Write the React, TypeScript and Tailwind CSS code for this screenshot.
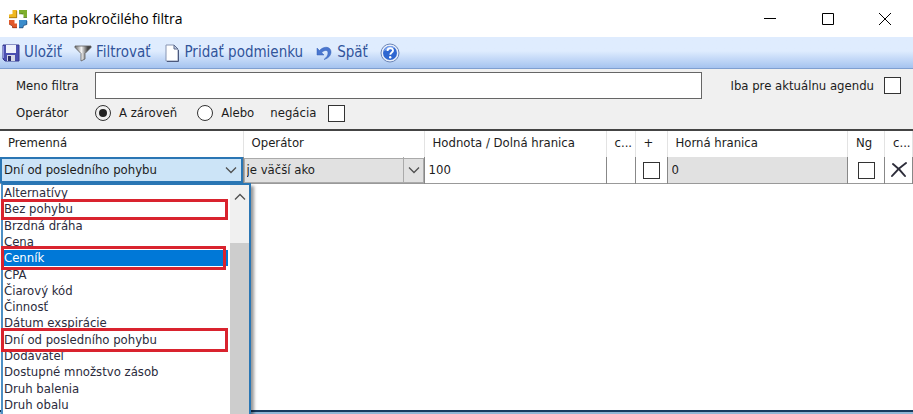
import { ReactNode } from "react";
import clsx from "clsx";

const variables = [
  "Alternatívy",
  "Bez pohybu",
  "Brzdná dráha",
  "Cena",
  "Cenník",
  "CPA",
  "Čiarový kód",
  "Činnosť",
  "Dátum exspirácie",
  "Dní od posledního pohybu",
  "Dodávateľ",
  "Dostupné množstvo zásob",
  "Druh balenia",
  "Druh obalu",
];

// rows framed in red in the list
const frames: Record<string, string> = {
  "Bez pohybu": "-top-0.5 -bottom-0.5 -left-0.5 right-0",
  Cenník: "-top-1 -bottom-1 -left-0.5 right-0.5",
  "Dní od posledního pohybu": "-top-1 -bottom-1 -left-0.5 right-0",
};

function LogoIcon() {
  return (
    <svg viewBox="0 0 20 20" className="size-5" aria-hidden="true">
      <path d="M4.500 1H9v8H1V5.500l3.500-.5z" fill="#f0b820" />
      <path d="M1 8.700h7.700V2" fill="none" stroke="#8a6510" strokeWidth="0.700" />
      <path d="M11 1h8v7.500h-3.500V5.500L11 4.500z" fill="#7fae2c" />
      <path d="M15.500 8.500H19M11 4.800h4" fill="none" stroke="#4c6a18" strokeWidth="0.700" />
      <path d="M1 11h5.500v3.500H9V19H4.500v-2L1 15z" fill="#e2592a" />
      <path d="M1 15l3.500 2v1.700H9" fill="none" stroke="#8c2c10" strokeWidth="0.700" />
      <path d="M11 11h8v4.500l-3.500 1-.5 2.500h-4z" fill="#3b8ccb" />
      <path d="M18.800 12v3.500l-3.300 1-.5 2.300h-4" fill="none" stroke="#17406f" strokeWidth="0.700" />
    </svg>
  );
}

function SaveIcon() {
  return (
    <svg viewBox="0 0 18 18" className="size-[18px]" aria-hidden="true">
      <path d="M1 1h16v16H3l-2-2z" fill="#4a4fb0" stroke="#34388c" />
      <path d="M4 1h10v8H4z" fill="#eef1fb" />
      <path d="M1.500 2v12" stroke="#8b90de" />
      <path d="M5 11h8v6H5z" fill="#d5d8e6" />
      <path d="M6 12h3v5H6z" fill="#2b2e6c" />
    </svg>
  );
}

function FunnelIcon() {
  return (
    <svg viewBox="0 0 18 18" className="size-[18px]" aria-hidden="true">
      <defs>
        <linearGradient id="funnel" x1="0" x2="1">
          <stop offset="0" stopColor="#6c6c6c" />
          <stop offset="0.4" stopColor="#f4f4f4" />
          <stop offset="0.8" stopColor="#444" />
        </linearGradient>
      </defs>
      <path d="M1 2h16v1.500l-6 6V15l-4 2V9.500l-6-6z" fill="url(#funnel)" stroke="#5a5a5a" strokeWidth="0.8" />
    </svg>
  );
}

function PageIcon() {
  return (
    <svg viewBox="0 0 18 18" className="size-[18px]" aria-hidden="true">
      <path d="M3 1h8l4 4v12H3z" fill="#fff" stroke="#8795b3" />
      <path d="M15.500 6v11.500H4" fill="none" stroke="#4b587c" />
      <path d="M11 1v4h4z" fill="#c4d0e6" stroke="#5d6b8d" />
    </svg>
  );
}

function UndoIcon() {
  return (
    <svg viewBox="0 0 18 18" className="size-[18px]" aria-hidden="true">
      <path d="M2 4v7h7L6.700 8.700C9 6 13 5.500 13 9c0 2.500-1.500 4.500-4 6.500 4-1 7-4 7-7.500 0-5.500-7-6.500-11.500-1.500z" fill="#4a76cf" stroke="#3560b6" strokeWidth="0.5" />
    </svg>
  );
}

function HelpIcon() {
  return (
    <svg viewBox="0 0 20 20" className="size-5" aria-hidden="true">
      <circle cx="10" cy="10" r="9" fill="#e9effa" stroke="#6d86b8" />
      <circle cx="10" cy="10" r="7" fill="#2f66d0" />
      <path d="M4 8a6.500 6.500 0 0 1 11-3c-3 0-7 1-11 3z" fill="#7da4ee" />
      <path d="M7.500 8c0-3.500 5.500-3.500 5.500-.5 0 2-2.700 2-2.700 4.200" fill="none" stroke="#fff" strokeWidth="1.900" />
      <circle cx="10.200" cy="14.200" r="1.200" fill="#fff" />
    </svg>
  );
}

function Chevron({ className }: { className?: string }) {
  return (
    <svg viewBox="0 0 12 8" className={clsx("h-2 w-3", className)} fill="none" stroke="#505050" strokeWidth="1.300" aria-hidden="true">
      <path d="M1 1.500l5 5 5-5" />
    </svg>
  );
}

function ToolButton({ icon, children }: { icon: ReactNode; children: ReactNode }) {
  return (
    <button type="button" className="flex items-center gap-1 whitespace-nowrap">
      {icon}
      {children}
    </button>
  );
}

function CheckBox({ id, label }: { id?: string; label?: string }) {
  return (
    <input
      id={id}
      type="checkbox"
      aria-label={label}
      className="block size-[17px] shrink-0 appearance-none border border-[#333] bg-white checked:bg-[#333]"
    />
  );
}

function Radio({ id, checked }: { id: string; checked?: boolean }) {
  return (
    <input
      id={id}
      type="radio"
      name="operator"
      defaultChecked={checked}
      className="size-4 shrink-0 appearance-none rounded-full border border-[#333] bg-white p-[3px] checked:bg-[#222] checked:bg-clip-content"
    />
  );
}

function VariableList() {
  return (
    <div className="absolute top-full left-px z-10 flex h-60 w-[250px] border-2 border-[#2a76b4] border-l-[#4d8fc4] bg-white shadow-[3px_3px_3px_rgba(0,0,0,0.4)]">
      <ul role="listbox" aria-label="Premenná" className="flex h-[228px] flex-1 flex-col">
        {variables.map((name) => (
          <li
            key={name}
            role="option"
            aria-selected={name === "Cenník"}
            className={clsx(
              "relative flex flex-1 items-center pl-px leading-4 whitespace-nowrap",
              name === "Cenník" ? "bg-[#0078d7] text-white" : "text-[#2b2b3c]"
            )}
          >
            {name}
            {frames[name] && (
              <span className={clsx("absolute z-10 border-3 border-[#d9232e]", frames[name])} />
            )}
          </li>
        ))}
      </ul>
      <div className="ml-0.5 flex w-[19px] flex-col items-center bg-[#f0f0f0]">
        <Chevron className="mt-2 rotate-180" />
        <div className="mt-[42px] w-full flex-1 bg-[#cdcdcd]" />
      </div>
    </div>
  );
}

export default function App() {
  return (
    <div className="flex h-screen flex-col overflow-hidden bg-white font-['DejaVu_Sans_Condensed','DejaVu_Sans',sans-serif] text-[13px] text-[#1c1c1c]">
      <header className="flex h-[37px] shrink-0 items-center pl-2">
        <LogoIcon />
        <h1 className="ml-[5px] flex-1 font-['Open_Sans',sans-serif] text-sm text-black">Karta pokročilého filtra</h1>
        <div className="flex items-center">
          <button type="button" aria-label="Minimalizovať" className="flex h-9 w-[58px] items-center justify-center">
            <svg viewBox="0 0 12 12" className="size-3" stroke="#000"><path d="M0 5.500h12" /></svg>
          </button>
          <button type="button" aria-label="Maximalizovať" className="flex h-9 w-[58px] items-center justify-center">
            <svg viewBox="0 0 12 12" className="size-3" stroke="#000" fill="none"><path d="M.5.500h11v11H.5z" /></svg>
          </button>
          <button type="button" aria-label="Zavrieť" className="flex h-9 w-14 items-center justify-center">
            <svg viewBox="0 0 12 12" className="size-3" stroke="#000"><path d="M0 0l12 12M12 0L0 12" /></svg>
          </button>
        </div>
      </header>

      <nav className="flex h-8 shrink-0 items-center gap-3 border-b border-[#7f9fd0] bg-linear-to-b from-[#dfecfe] from-45% to-[#a5c3ef] pl-0.5 text-[15px] text-[#31549b]">
        <ToolButton icon={<SaveIcon />}>Uložiť</ToolButton>
        <ToolButton icon={<FunnelIcon />}>Filtrovať</ToolButton>
        <ToolButton icon={<PageIcon />}>Pridať podmienku</ToolButton>
        <ToolButton icon={<UndoIcon />}>Späť</ToolButton>
        <button type="button" aria-label="Pomocník"><HelpIcon /></button>
      </nav>

      <form className="shrink-0 border-b-2 border-[#444] bg-[#f0f0f0] pt-[3px] pr-3 pb-1.5 pl-4">
        <div className="flex items-center">
          <label htmlFor="name" className="w-[79px]">Meno filtra</label>
          <input id="name" type="text" className="h-[27px] min-w-0 flex-1 border border-[#666] bg-white px-1" />
          <label htmlFor="current" className="mr-2.5 ml-7">Iba pre aktuálnu agendu</label>
          <CheckBox id="current" />
        </div>
        <div className="mt-1 flex h-5 items-center">
          <span className="w-[79px]">Operátor</span>
          <Radio id="and" checked />
          <label htmlFor="and" className="ml-2">A zároveň</label>
          <span className="w-5" />
          <Radio id="or" />
          <label htmlFor="or" className="ml-2">Alebo</label>
          <label htmlFor="negation" className="mr-3 ml-4">negácia</label>
          <CheckBox id="negation" />
        </div>
      </form>

      <table className="w-full table-fixed border-collapse text-left">
        <colgroup>
          <col className="w-[243px]" />
          <col className="w-[181px]" />
          <col className="w-[182px]" />
          <col className="w-[29px]" />
          <col className="w-8" />
          <col />
          <col className="w-[37px]" />
          <col className="w-7" />
        </colgroup>
        <thead>
          <tr className="h-[26px] *:overflow-hidden *:border-r *:border-[#e3e3e3] *:p-0 *:pb-0.5 *:pl-2 *:font-normal *:whitespace-nowrap">
            <th>Premenná</th>
            <th>Operátor</th>
            <th>Hodnota / Dolná hranica</th>
            <th>c...</th>
            <th>+</th>
            <th>Horná hranica</th>
            <th>Ng</th>
            <th>c...</th>
          </tr>
        </thead>
        <tbody>
          <tr className="h-[26px] border-b border-[#999] *:border-r *:border-[#888] *:p-0">
            <td className="relative">
              <select aria-label="Premenná" defaultValue="Dní od posledního pohybu" className="block h-[26px] w-full appearance-none border-2 border-[#2a76b4] bg-[#cce4f7] pl-0.5">
                {variables.map((name) => (
                  <option key={name}>{name}</option>
                ))}
              </select>
              <Chevron className="pointer-events-none absolute top-[9px] right-1.5" />
              <VariableList />
            </td>
            <td className="relative">
              <select aria-label="Operátor" className="block h-[25px] w-full appearance-none border border-[#aaa] bg-[#e1e1e1] pl-0.5">
                <option>je väčší ako</option>
              </select>
              <span className="pointer-events-none absolute inset-y-0 right-0 flex w-[21px] items-center justify-center border-l border-[#aaa]">
                <Chevron />
              </span>
            </td>
            <td>
              <input aria-label="Hodnota / Dolná hranica" defaultValue="100" className="block w-full pl-1" />
            </td>
            <td></td>
            <td>
              <div className="flex justify-center"><CheckBox label="+" /></div>
            </td>
            <td className="bg-[#e1e1e1]">
              <input aria-label="Horná hranica" defaultValue="0" className="block w-full pl-1" />
            </td>
            <td>
              <div className="flex justify-center"><CheckBox label="Ng" /></div>
            </td>
            <td>
              <button type="button" aria-label="Zmazať" className="flex w-full justify-center">
                <svg viewBox="0 0 18 18" className="size-[18px]" fill="none" stroke="#2d2d3a" strokeLinecap="round">
                  <path d="M3 3c4 3 8 7 12 12" strokeWidth="2" />
                  <path d="M16 2C10 6 6 10 2 15" strokeWidth="2" />
                </svg>
              </button>
            </td>
          </tr>
        </tbody>
      </table>

      <footer className="mt-auto h-1 shrink-0 border-t-2 border-[#173a5e] bg-[#8fb6d6]" />
    </div>
  );
}
